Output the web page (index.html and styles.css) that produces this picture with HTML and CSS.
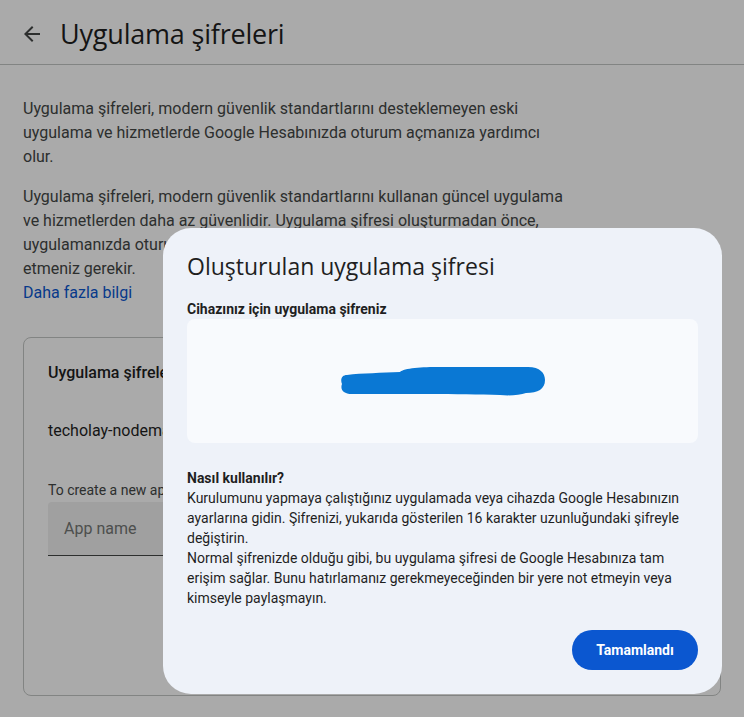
FILE: index.html
```html
<!DOCTYPE html>
<html lang="tr">
<head>
<meta charset="utf-8">
<title>Uygulama şifreleri</title>
<link rel="stylesheet" href="styles.css">
</head>
<body>
<div class="page">
  <header class="topbar">
    <svg class="back" width="24" height="24" viewBox="0 0 24 24"><path d="M20 11H7.83l5.59-5.59L12 4l-8 8 8 8 1.41-1.41L7.83 13H20v-2z" fill="currentColor"/></svg>
    <h1 class="title">Uygulama şifreleri</h1>
  </header>
  <main class="content">
    <p class="para">Uygulama şifreleri, modern güvenlik standartlarını desteklemeyen eski uygulama ve hizmetlerde Google Hesabınızda oturum açmanıza yardımcı olur.</p>
    <p class="para para2">Uygulama şifreleri, modern güvenlik standartlarını kullanan güncel uygulama ve hizmetlerden daha az güvenlidir. Uygulama şifresi oluşturmadan önce, uygulamanızda oturum açmak için Google ile oturum açmayı kontrol<br>etmeniz gerekir.<br><a class="link" href="#">Daha fazla bilgi</a></p>
    <section class="card">
      <h2 class="card-title">Uygulama şifreleriniz</h2>
      <div class="app-row">techolay-nodemailer</div>
      <div class="hint">To create a new app specific password, type a name for it below...</div>
      <div class="input">App name</div>
    </section>
  </main>
</div>
<div class="scrim">
  <div class="dialog">
    <h2 class="dlg-title">Oluşturulan uygulama şifresi</h2>
    <div class="dlg-label">Cihazınız için uygulama şifreniz</div>
    <div class="pw-box">
      <svg class="scribble" width="206" height="30" viewBox="0 0 206 30"><path d="M7 8 C 22 6, 42 6, 60 5 C 64 1, 82 0, 100 0 L 188 0 C 200 0, 205 6, 205 13 C 205 22, 198 26, 186 26 C 180 28, 170 29, 160 28 C 120 27, 60 27, 12 27 C 3 27, 0 22, 2 17 C 0 12, 2 8, 7 8 Z" fill="#0a78d4"/></svg>
    </div>
    <div class="howto">
      <div class="howto-title">Nasıl kullanılır?</div>
      <p class="howto-text">Kurulumunu yapmaya çalıştığınız uygulamada veya cihazda Google Hesabınızın ayarlarına gidin. Şifrenizi, yukarıda gösterilen 16 karakter uzunluğundaki şifreyle değiştirin.<br>Normal şifrenizde olduğu gibi, bu uygulama şifresi de Google Hesabınıza tam erişim sağlar. Bunu hatırlamanız gerekmeyeceğinden bir yere not etmeyin veya kimseyle paylaşmayın.</p>
    </div>
    <div class="actions">
      <button class="done">Tamamlandı</button>
    </div>
  </div>
</div>
</body>
</html>
```

FILE: styles.css
```css
* { box-sizing: border-box; }
html, body { margin: 0; padding: 0; }
body {
  background: #ffffff;
  font-family: Roboto, "Liberation Sans", sans-serif;
  color: #1f1f1f;
  width: 744px;
  height: 717px;
  overflow: hidden;
}
.page { width: 744px; }
.topbar {
  display: flex;
  align-items: center;
  height: 65px;
  border-bottom: 1px solid #c4c7c5;
  padding: 3px 0 0 20px;
}
.back { color: #444746; width: 24px; height: 24px; margin-right: 16px; flex-shrink: 0; }
.title {
  margin: 0;
  font-family: "Open Sans", Roboto, sans-serif;
  font-weight: 400;
  font-size: 27px;
  color: #1f1f1f;
  letter-spacing: -0.2px;
}
.content { padding: 32px 23px 0 23px; }
.para {
  margin: 0;
  width: 545px;
  font-size: 16px;
  line-height: 24px;
  color: #444746;
}
.para2 { margin-top: 16px; }
.link { color: #0b57d0; text-decoration: none; }
.card {
  margin-top: 32px;
  border: 1px solid #c4c7c5;
  border-radius: 8px;
  height: 359px;
  width: 698px;
  padding: 23px 24px;
}
.card-title { margin: 0; font-size: 16px; font-weight: 500; color: #1f1f1f; line-height: 24px; }
.app-row { margin-top: 34px; font-size: 16px; line-height: 24px; color: #1f1f1f; }
.hint { margin-top: 37px; font-size: 14px; line-height: 20px; color: #444746; }
.input {
  margin-top: 2px;
  width: 300px;
  height: 54px;
  background: #f0f0f0;
  border-bottom: 1px solid #444746;
  border-radius: 4px 4px 0 0;
  padding: 15px 16px;
  font-size: 16px;
  line-height: 24px;
  color: #747775;
}
.scrim {
  position: fixed;
  inset: 0;
  background: rgba(0, 0, 0, 0.335);
}
.dialog {
  position: absolute;
  left: 163px;
  top: 228px;
  width: 559px;
  height: 466px;
  background: #eef2f9;
  border-radius: 28px;
  padding: 22px 24px 24px 24px;
  display: flex;
  flex-direction: column;
}
.dlg-title {
  margin: 0;
  font-family: "Open Sans", Roboto, sans-serif;
  font-weight: 400;
  font-size: 23px;
  line-height: 32px;
  color: #1f1f1f;
}
.dlg-label {
  margin-top: 17px;
  font-size: 14px;
  font-weight: 700;
  line-height: 20px;
  color: #1f1f1f;
}
.pw-box {
  height: 124px;
  background: #f8fafd;
  border-radius: 8px;
  display: flex;
  justify-content: center;
  align-items: center;
}
.scribble { margin-left: 1px; margin-top: 1px; }
.howto { margin-top: 25px; }
.howto-title { font-size: 14px; font-weight: 700; line-height: 20px; color: #1f1f1f; }
.howto-text { margin: 0; font-size: 14px; line-height: 20px; color: #1f1f1f; width: 512px; }
.actions { margin-top: auto; display: flex; justify-content: flex-end; }
.done {
  font-family: Roboto, "Liberation Sans", sans-serif;
  background: #0b57d0;
  color: #fff;
  border: none;
  border-radius: 20px;
  height: 40px;
  width: 126px;
  font-size: 14px;
  font-weight: 700;
}
```
